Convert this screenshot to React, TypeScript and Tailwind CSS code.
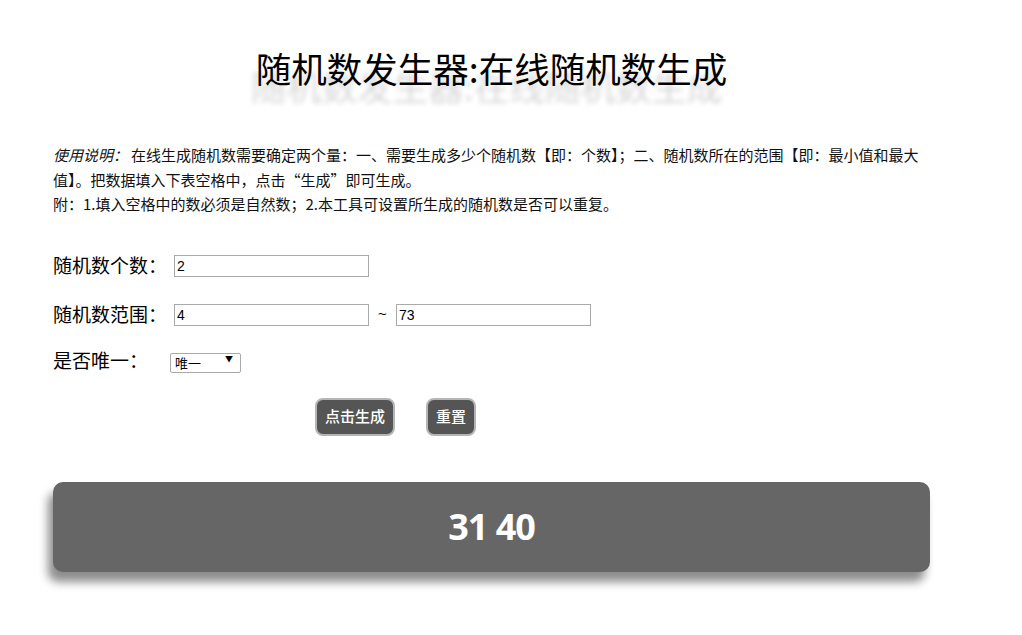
import React, { useState } from 'react';

const cjk = "font-['Noto_Sans_CJK_SC','Microsoft_YaHei',sans-serif]";

const App: React.FC = () => {
  const [count, setCount] = useState('2');
  const [min, setMin] = useState('4');
  const [max, setMax] = useState('73');
  const [unique, setUnique] = useState('1');

  return (
    <div className={`min-h-[635px] bg-white text-black ${cjk}`}>
      <div className="ml-[53px] w-[877px] pt-[48px]">
        {/* Title */}
        <h1 className="text-center text-[35.5px] leading-[40px] font-normal [text-shadow:-5px_18px_5px_rgba(0,0,0,0.16)]">
          随机数发生器:在线随机数生成
        </h1>

        {/* Instructions */}
        <div className="mt-[55px] text-[15px] leading-[24.5px] text-[#111]">
          <p>
            <em className="mr-[3px] inline-block italic">使用说明：</em>在线生成随机数需要确定两个量：一、需要生成多少个随机数【即：个数】；二、随机数所在的范围【即：最小值和最大值】。把数据填入下表空格中，点击“生成”即可生成。
          </p>
          <p>附：1.填入空格中的数必须是自然数；2.本工具可设置所生成的随机数是否可以重复。</p>
        </div>

        {/* Form */}
        <div className="mt-[38px] flex h-[22px] items-center">
          <span className="w-[121px] text-[19px]">随机数个数：</span>
          <input
            value={count}
            onChange={(e) => setCount(e.target.value)}
            className="h-[22px] w-[195px] border border-[#a9a9a9] px-[2px] font-['Liberation_Sans',sans-serif] text-[14px] outline-none"
          />
        </div>

        <div className="mt-[27px] flex h-[22px] items-center">
          <span className="w-[121px] text-[19px]">随机数范围：</span>
          <input
            value={min}
            onChange={(e) => setMin(e.target.value)}
            className="h-[22px] w-[195px] border border-[#a9a9a9] px-[2px] font-['Liberation_Sans',sans-serif] text-[14px] outline-none"
          />
          <span className="w-[27px] text-center font-['Liberation_Sans',sans-serif] text-[15px]">~</span>
          <input
            value={max}
            onChange={(e) => setMax(e.target.value)}
            className="h-[22px] w-[195px] border border-[#a9a9a9] px-[2px] font-['Liberation_Sans',sans-serif] text-[14px] outline-none"
          />
        </div>

        <div className="mt-[25px] flex h-[20px] items-center">
          <span className="w-[117px] text-[19px]">是否唯一：</span>
          <div className="relative">
            <select
              value={unique}
              onChange={(e) => setUnique(e.target.value)}
              className="h-[20px] w-[71px] appearance-none rounded-[2px] border border-[#a9a9a9] bg-white pl-[4px] text-[13px] leading-[18px] outline-none"
            >
              <option value="1">唯一</option>
              <option value="0">可重复</option>
            </select>
            <span className="pointer-events-none absolute right-[8px] top-[4px] text-[8px] leading-[12px]">▼</span>
          </div>
        </div>

        {/* Buttons */}
        <div className="mt-[27px] flex gap-[31px] pl-[262px]">
          <button className="h-[38px] w-[80px] rounded-[8px] border-2 border-[#b5b5b5] bg-[#555] text-[15px] font-medium text-white">
            点击生成
          </button>
          <button className="h-[38px] w-[50px] rounded-[8px] border-2 border-[#b5b5b5] bg-[#555] text-[15px] font-medium text-white">
            重置
          </button>
        </div>

        {/* Result */}
        <div className="mt-[46px] flex h-[90px] items-center justify-center rounded-[10px] bg-[#666] shadow-[-5px_10px_10px_rgba(0,0,0,0.45)]">
          <span className="font-['Open_Sans',sans-serif] text-[36px] font-bold tracking-[-1px] text-white">31 40</span>
        </div>
      </div>
    </div>
  );
};

export default App;
